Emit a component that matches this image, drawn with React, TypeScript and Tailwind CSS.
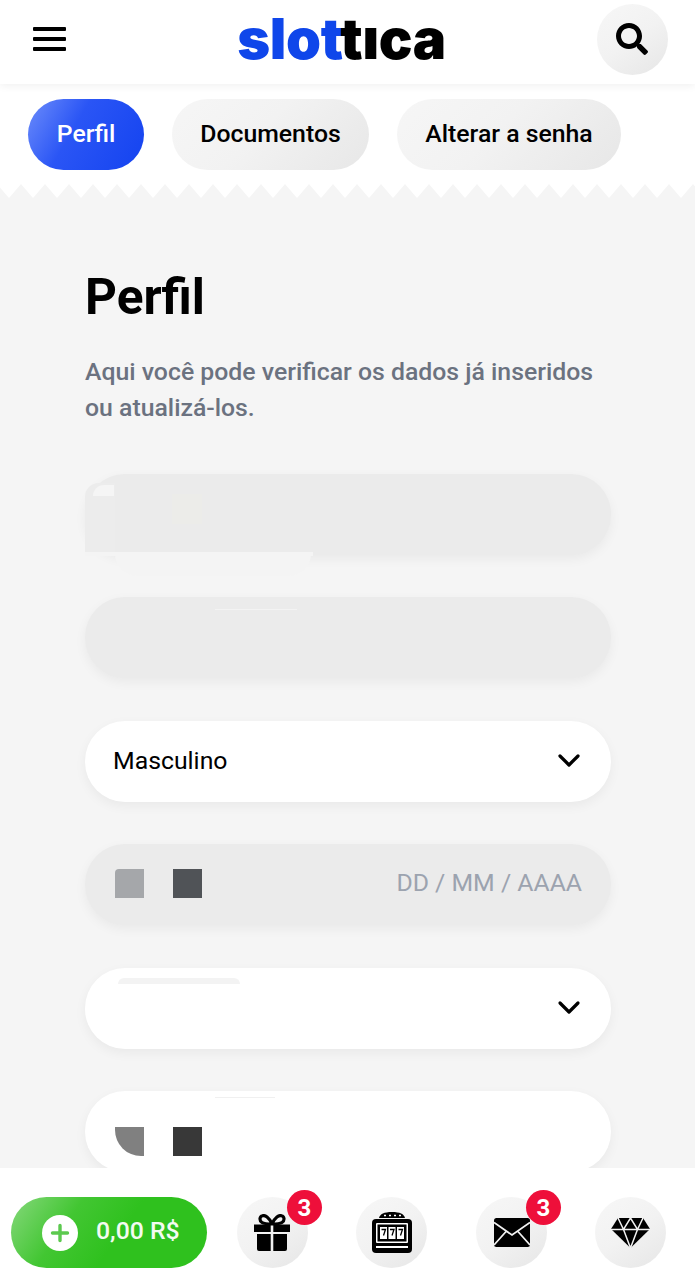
import React from "react";
import { FaSearch } from "react-icons/fa";

const tabGrey = "bg-[linear-gradient(135deg,#f6f6f6_0%,#f2f2f2_45%,#e7e7e7_100%)]";
const circle = "relative flex h-[71px] w-[71px] items-center justify-center rounded-full bg-[linear-gradient(145deg,#f7f7f7_0%,#f2f2f2_50%,#e6e6e6_100%)]";

function Chevron() {
  return (
    <svg width="24" height="16" viewBox="0 0 24 16" fill="none" stroke="#000" strokeWidth="3.2" strokeLinecap="round" strokeLinejoin="round">
      <path d="M3 3l9 9 9-9" />
    </svg>
  );
}

function Badge() {
  return (
    <span className="absolute left-[50px] top-[-7px] flex h-[35px] w-[35px] items-center justify-center rounded-full bg-[#ee0f3a] text-[24px] font-bold leading-none text-white">3</span>
  );
}

function Field({ white, children, extra }: { white?: boolean; children?: React.ReactNode; extra?: string }) {
  return (
    <div className={`relative flex h-[81px] items-center overflow-hidden rounded-[40px] pl-[29px] pr-[29px] shadow-[0_4px_12px_rgba(0,0,0,0.05)] ${white ? "bg-white" : "bg-[#ebebeb]"} ${extra ?? ""}`}>
      {children}
    </div>
  );
}

function Squares({ a, b, round }: { a: string; b: string; round?: boolean }) {
  return (
    <div className="ml-[1px] flex gap-[29px]">
      <span className={`block h-[29px] w-[29px] ${a} ${round ? "rounded-bl-[26px]" : "rounded-tl-[4px]"}`} />
      <span className={`block h-[29px] w-[29px] ${b}`} />
    </div>
  );
}

export default function App() {
  return (
    <div className="relative h-[1280px] w-[695px] overflow-hidden bg-white font-['Roboto',sans-serif] text-black">
      <header className="relative z-10 flex h-[84px] items-center justify-between bg-white pb-[6px] pl-[33px] pr-[27px] shadow-[0_2px_8px_rgba(0,0,0,0.06)]">
        <div className="flex w-[33px] flex-col gap-[6px]">
          <span className="h-[4px] rounded-[1px] bg-black" />
          <span className="h-[4px] rounded-[1px] bg-black" />
          <span className="h-[4px] rounded-[1px] bg-black" />
        </div>
        <div className="ml-[20px] font-['Inter',sans-serif] text-[56px] font-black leading-none tracking-[-0.3px]">
          <span className="text-[#0f46ea]">slot</span><span className="text-black">tıca</span>
        </div>
        <div className={circle}>
          <FaSearch className="h-[32px] w-[32px] text-black" />
        </div>
      </header>

      <nav className="flex gap-[28px] bg-white pb-[14px] pl-[28px] pt-[15px] text-[24.8px] font-medium leading-[28px]">
        <div className="flex h-[71px] w-[116px] items-center justify-center rounded-[36px] bg-[linear-gradient(120deg,#6d8dfb_0%,#2a55f5_40%,#1443f0_100%)] pb-[2px] text-white">Perfil</div>
        <div className={`flex h-[71px] w-[197px] items-center justify-center rounded-[36px] pb-[2px] ${tabGrey}`}>Documentos</div>
        <div className={`flex h-[71px] w-[224px] items-center justify-center rounded-[36px] pb-[2px] ${tabGrey}`}>Alterar a senha</div>
      </nav>

      <svg className="block h-[14px] w-[695px]" viewBox="0 0 695 14" aria-hidden="true">
        <defs>
          <pattern id="zig" x="9" y="0" width="24" height="14" patternUnits="userSpaceOnUse">
            <path d="M0 14L12 0l12 14z" fill="#f5f5f5" />
          </pattern>
        </defs>
        <rect width="695" height="14" fill="url(#zig)" />
      </svg>

      <main className="h-[1100px] bg-[#f5f5f5] pl-[85px] pr-[84px] pt-[66px]">
        <h1 className="text-[49.6px] font-bold leading-[66px]">Perfil</h1>
        <p className="mt-[24px] text-[24.8px] font-medium leading-[36px] text-[#6b7280]">
          Aqui você pode verificar os dados já inseridos<br />ou atualizá-los.
        </p>
        <div className="mt-[48px] flex flex-col gap-[42.4px]">
          <div className="relative">
            <Field />
            <span className="absolute left-[0px] top-[9px] h-[70px] w-[30px] rounded-tl-[14px] bg-[#ececec]" />
            <span className="absolute left-[8px] top-[11px] h-[11px] w-[21px] rounded-tl-[14px] bg-[#f5f5f5]" />
            <span className="absolute left-[87px] top-[20px] h-[30px] w-[30px] bg-[#ecece9]" />
            <span className="absolute left-[0px] top-[78px] h-[4px] w-[228px] bg-[#f4f4f4]" />
            <span className="absolute left-[30px] top-[80px] h-[22px] w-[196px] rounded-b-[60px] bg-[#f4f4f4]" />
          </div>
          <div className="relative">
            <Field />
            <span className="absolute left-[130px] top-[12px] h-[1px] w-[82px] bg-[#f3f3f3]" />
          </div>
          <Field white extra="justify-between pr-[30px]">
            <span className="-ml-[1px] pb-[2px] text-[24.8px] text-black">Masculino</span>
            <Chevron />
          </Field>
          <Field extra="justify-between pb-[2px]">
            <Squares a="bg-[#a5a7aa]" b="bg-[#505357]" />
            <span className="pb-[2px] text-[24.8px] text-[#9ca3af]">DD / MM / AAAA</span>
          </Field>
          <div className="relative">
            <Field white extra="justify-end pr-[30px]">
              <Chevron />
            </Field>
            <span className="absolute left-[33px] top-[10px] h-[6px] w-[122px] rounded-t-[20px] bg-[#f3f3f3]" />
          </div>
          <div className="relative">
            <Field white extra="items-end pb-[16px]">
              <Squares a="bg-[#808080]" b="bg-[#383838]" round />
            </Field>
            <span className="absolute left-[130px] top-[6px] h-[1px] w-[60px] bg-[#f0f0f0]" />
          </div>
        </div>
      </main>

      <footer className="absolute bottom-0 left-0 flex h-[112px] w-[695px] items-start bg-white pl-[11px] pt-[29px]">
        <div className="flex h-[71px] w-[196px] items-center rounded-[36px] bg-[linear-gradient(125deg,#86d87c_0%,#42c632_30%,#2fc11e_55%,#2fc11e_100%)] pl-[31px] text-[24.8px] font-medium text-[#f3fbf1]">
          <span className="flex h-[36px] w-[36px] items-center justify-center rounded-full bg-white">
            <svg width="20" height="20" viewBox="0 0 20 20" stroke="#5cc94f" strokeWidth="3.400" strokeLinecap="round">
              <path d="M10 2.500v15M2.500 10h15" />
            </svg>
          </span>
          <span className="ml-[18px] pb-[3px]">0,00 R$</span>
        </div>

        <div className={`${circle} ml-[30px]`}>
          <svg className="-ml-[1px]" width="36" height="37" viewBox="0 0 36 37" fill="#000">
            <path d="M0 10.500h16.700V18H0zM19.300 10.500H36V18H19.300zM3 20h13.700v17H5a2 2 0 0 1-2-2zM19.300 20H33v15a2 2 0 0 1-2 2H19.300z" />
            <path d="M18 10C15 3 11 1 8.500 1.700 5.500 2.400 5 6.500 8 8.500c1.500 1 3 1.500 10 1.500zm0 0c3-7 7-9 9.500-8.300 3 .7 3.500 4.800.5 6.800-1.500 1-3 1.500-10 1.500z" fill="none" stroke="#000" strokeWidth="3.200" />
          </svg>
          <Badge />
        </div>

        <div className={`${circle} ml-[48px]`}>
          <svg width="40" height="41" viewBox="0 0 40 41">
            <path d="M7 6c1-4 5-6 13-6s12 2 13 6z" fill="#000" />
            <rect y="7" width="40" height="34" rx="4" fill="#000" />
            <rect x="4" y="11" width="32" height="20" rx="1" fill="#fff" />
            <rect x="5.500" y="12.500" width="29" height="17" fill="#000" />
            <rect x="8" y="15" width="7" height="12" fill="#fff" />
            <rect x="16.500" y="15" width="7" height="12" fill="#fff" />
            <rect x="25" y="15" width="7" height="12" fill="#fff" />
            <path d="M9.500 17.500h4l-2 6M18 17.500h4l-2 6M26.500 17.500h4l-2 6" fill="none" stroke="#000" strokeWidth="1.300" />
            <rect x="4" y="34" width="32" height="2" fill="#fff" />
            <path d="M12 3.500h2M17 3.500h2M22 3.500h2M27 3.500h2" stroke="#fff" strokeWidth="1.600" />
          </svg>
        </div>

        <div className={`${circle} ml-[49px]`}>
          <svg width="36" height="29" viewBox="0 0 36 29">
            <rect width="36" height="29" rx="2.500" fill="#000" />
            <path d="M0 4.500 18 17 36 4.500M0 27 12.500 13M36 27 23.500 13" fill="none" stroke="#f2f2f2" strokeWidth="1.800" />
          </svg>
          <Badge />
        </div>

        <div className={`${circle} ml-[48px]`}>
          <svg width="39" height="30" viewBox="0 0 39 30">
            <path d="M7 0h25l7 11L19.500 30 0 11z" fill="#000" />
            <path d="M0 11.500h39M7 0l5.500 11.500L19.500 0l7 11.500L32 0M12.500 11.500l7 18.500 7-18.500" fill="none" stroke="#f2f2f2" strokeWidth="1.500" />
          </svg>
        </div>
      </footer>
    </div>
  );
}
